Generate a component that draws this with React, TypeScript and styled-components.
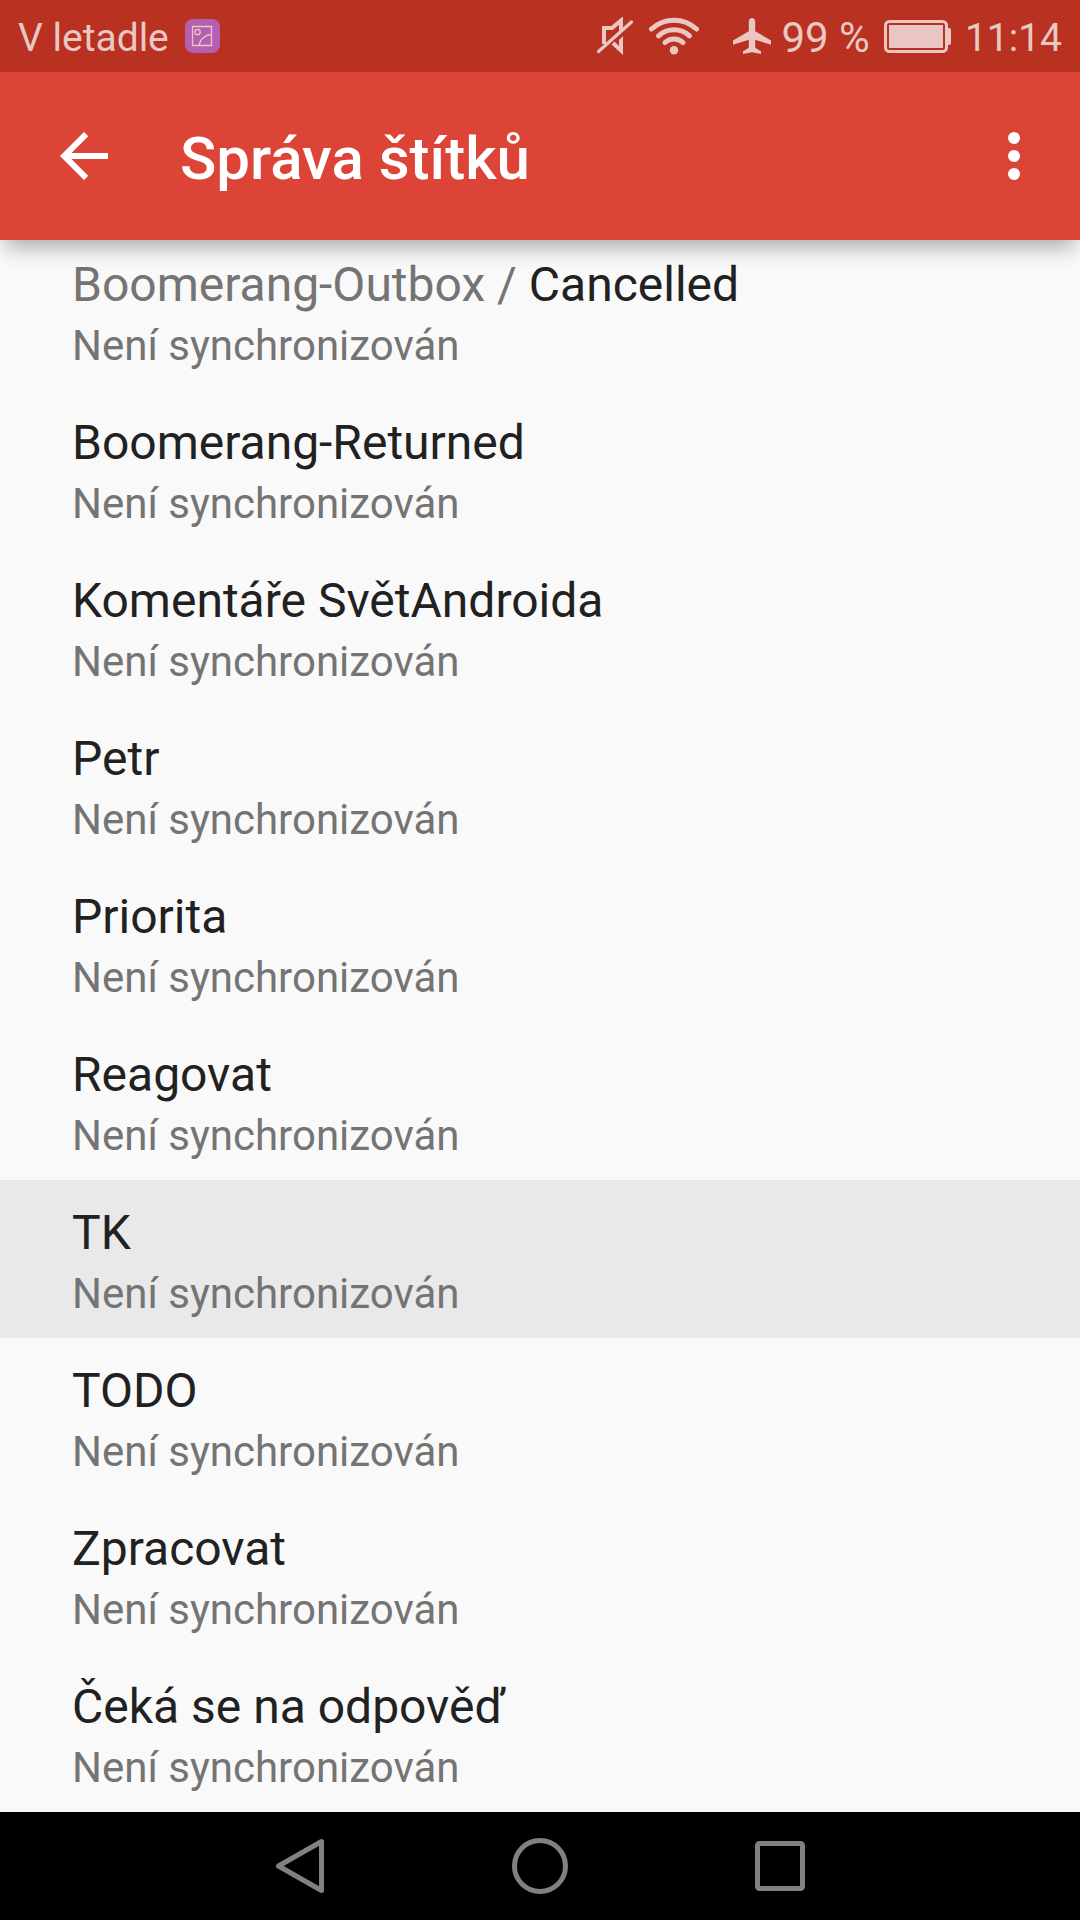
import React from "react";
import styled, { createGlobalStyle } from "styled-components";

const GlobalStyle = createGlobalStyle`
  *, *::before, *::after { box-sizing: border-box; }
  body {
    margin: 0;
    background: #f9f9f9;
    font-family: Roboto, "Noto Sans", sans-serif;
  }
  button {
    margin: 0;
    padding: 0;
    border: 0;
    background: none;
    color: inherit;
    font: inherit;
    text-align: left;
    cursor: pointer;
  }
  svg { display: block; flex: none; }
`;

const Screen = styled.div`
  display: flex;
  flex-direction: column;
  min-height: 100vh;
`;

const StatusBar = styled.div`
  display: flex;
  align-items: center;
  justify-content: space-between;
  height: 72px;
  padding: 0 18px;
  background: #b83121;
  color: #eac7c3;
`;

const StatusGroup = styled.div<{ $gap: number }>`
  display: flex;
  align-items: center;
  gap: ${(p) => p.$gap}px;
`;

const StatusText = styled.span<{ $large?: boolean }>`
  padding-top: 4px;
  font-size: ${(p) => (p.$large ? 42 : 39)}px;
  line-height: 48px;
  white-space: nowrap;
`;

const Connectivity = styled(StatusGroup)`
  margin-right: 24px;
`;

const AppBar = styled.header`
  position: relative;
  z-index: 1;
  display: flex;
  align-items: center;
  height: 168px;
  padding: 0 30px 0 48px;
  background: #dc4437;
  color: #fff;
  box-shadow: 0 12px 20px -5px rgba(0, 0, 0, 0.32);
`;

const AppTitle = styled.h1`
  flex: 1;
  margin: 0;
  padding: 6px 0 0 60px;
  font-size: 60px;
  font-weight: 500;
  line-height: 70px;
`;

const IconButton = styled.button`
  display: flex;
  align-items: center;
  justify-content: center;
  width: 72px;
  height: 72px;
`;

/* The list is scrolled slightly, its first row starts under the app bar. */
const LabelList = styled.ul`
  flex: 1;
  margin: -8px 0 0;
  padding: 0;
  list-style: none;
`;

const LabelRow = styled.button<{ $pressed: boolean }>`
  display: flex;
  flex-direction: column;
  gap: 8px;
  width: 100%;
  padding: 25px 72px 19px;
  background: ${(p) => (p.$pressed ? "#e9e9e9" : "transparent")};
`;

const LabelName = styled.span`
  color: #212121;
  font-size: 48px;
  line-height: 56px;
`;

const Muted = styled.span`
  color: #747474;
`;

const LabelStatus = styled(Muted)`
  font-size: 42px;
  line-height: 50px;
`;

const NavBar = styled.nav`
  display: flex;
  justify-content: center;
  height: 108px;
  background: #000;
`;

const NavButton = styled.button`
  display: flex;
  align-items: center;
  justify-content: center;
  width: 240px;
`;

type Label = { name: string; parent?: string; pressed?: boolean };

const labels: Label[] = [
  { parent: "Boomerang-Outbox", name: "Cancelled" },
  { name: "Boomerang-Returned" },
  { name: "Komentáře SvětAndroida" },
  { name: "Petr" },
  { name: "Priorita" },
  { name: "Reagovat" },
  { name: "TK", pressed: true },
  { name: "TODO" },
  { name: "Zpracovat" },
  { name: "Čeká se na odpověď" },
];

const PictureBadge = () => (
  <svg width="35" height="34" viewBox="0 0 35 34" fill="none" stroke="#eac7c3" strokeWidth="1.3">
    <rect width="35" height="34" rx="8" fill="#b35fb2" stroke="none" />
    <path d="M7.500 7.500h19v19h-19zM14 26.500C15 20 20 16 26.500 15.500" />
    <circle cx="12.500" cy="13" r="2.700" />
  </svg>
);

const MuteIcon = () => (
  <svg width="36" height="38" viewBox="0 0 36 38" fill="none" stroke="currentColor">
    <path d="M7 27V11h8L24 3.500V12" strokeWidth="4" />
    <path d="M26 0v13l-4 3.500V3.500zM26 38V19l-4 4v6l-4.500-4.500-3 3z" fill="currentColor" stroke="none" />
    <path d="M1.500 34.500L34.500 5" strokeWidth="3.200" strokeLinecap="round" />
  </svg>
);

const WifiIcon = () => (
  <svg width="50" height="38" viewBox="0 0 50 38" fill="none" stroke="currentColor" strokeWidth="5" strokeLinecap="round">
    <path d="M2.500 12A33 33 0 0 1 47.500 12" />
    <path d="M9.500 18.800A23 23 0 0 1 40.500 18.800" />
    <path d="M16 25.500A13 13 0 0 1 34 25.500" />
    <circle cx="25" cy="33.200" r="4.200" fill="currentColor" stroke="none" />
  </svg>
);

const PlaneIcon = () => (
  <svg width="38" height="36" viewBox="0 0 38 36" fill="currentColor">
    <path d="M19 0c-2 0-3.200 1.600-3.200 3.600v9.600L0 22.400v4.400l15.800-5v8L10 33.200V36l9-1.800 9 1.800v-2.800l-5.800-3.400v-8l15.800 5v-4.400l-15.800-9.200V3.600C22.200 1.600 21 0 19 0z" />
  </svg>
);

const BatteryIcon = () => (
  <svg width="67" height="33" viewBox="0 0 67 33" fill="currentColor">
    <rect x="1.500" y="1.500" width="61" height="30" rx="4" fill="none" stroke="currentColor" strokeWidth="3" />
    <rect x="5" y="5" width="54" height="23" />
    <path d="M63 8h2q2 0 2 2v13q0 2-2 2h-2z" />
  </svg>
);

const BackArrow = () => (
  <svg width="72" height="72" viewBox="0 0 24 24" fill="currentColor">
    <path d="M20 11H7.830l5.590-5.590L12 4l-8 8 8 8 1.410-1.410L7.830 13H20v-2z" />
  </svg>
);

const MoreDots = () => (
  <svg width="72" height="72" viewBox="0 0 24 24" fill="currentColor">
    <circle cx="12" cy="6" r="2" />
    <circle cx="12" cy="12" r="2" />
    <circle cx="12" cy="18" r="2" />
  </svg>
);

const NavIcon = ({ children }: { children: React.ReactNode }) => (
  <svg width="60" height="60" viewBox="0 0 60 60" fill="none" stroke="#818181" strokeWidth="5" strokeLinejoin="round">
    {children}
  </svg>
);

export default function App() {
  return (
    <Screen>
      <GlobalStyle />
      <StatusBar>
        <StatusGroup $gap={16}>
          <StatusText>V letadle</StatusText>
          <PictureBadge />
        </StatusGroup>
        <StatusGroup $gap={14}>
          <StatusGroup $gap={10}>
            <Connectivity $gap={16}>
              <MuteIcon />
              <WifiIcon />
            </Connectivity>
            <PlaneIcon />
            <StatusText $large>99 %</StatusText>
          </StatusGroup>
          <BatteryIcon />
          <StatusText>11:14</StatusText>
        </StatusGroup>
      </StatusBar>
      <AppBar>
        <IconButton aria-label="Zpět">
          <BackArrow />
        </IconButton>
        <AppTitle>Správa štítků</AppTitle>
        <IconButton aria-label="Další možnosti">
          <MoreDots />
        </IconButton>
      </AppBar>
      <LabelList>
        {labels.map((label) => (
          <li key={label.name}>
            <LabelRow $pressed={Boolean(label.pressed)}>
              <LabelName>
                {label.parent && <Muted>{label.parent} / </Muted>}
                {label.name}
              </LabelName>
              <LabelStatus>Není synchronizován</LabelStatus>
            </LabelRow>
          </li>
        ))}
      </LabelList>
      <NavBar>
        <NavButton aria-label="Zpět">
          <NavIcon>
            <path d="M51.500 5.500v49L8.500 30z" />
          </NavIcon>
        </NavButton>
        <NavButton aria-label="Domů">
          <NavIcon>
            <circle cx="30" cy="30" r="25.500" />
          </NavIcon>
        </NavButton>
        <NavButton aria-label="Přehled">
          <NavIcon>
            <rect x="7.500" y="7.500" width="45" height="45" rx="2" />
          </NavIcon>
        </NavButton>
      </NavBar>
    </Screen>
  );
}
